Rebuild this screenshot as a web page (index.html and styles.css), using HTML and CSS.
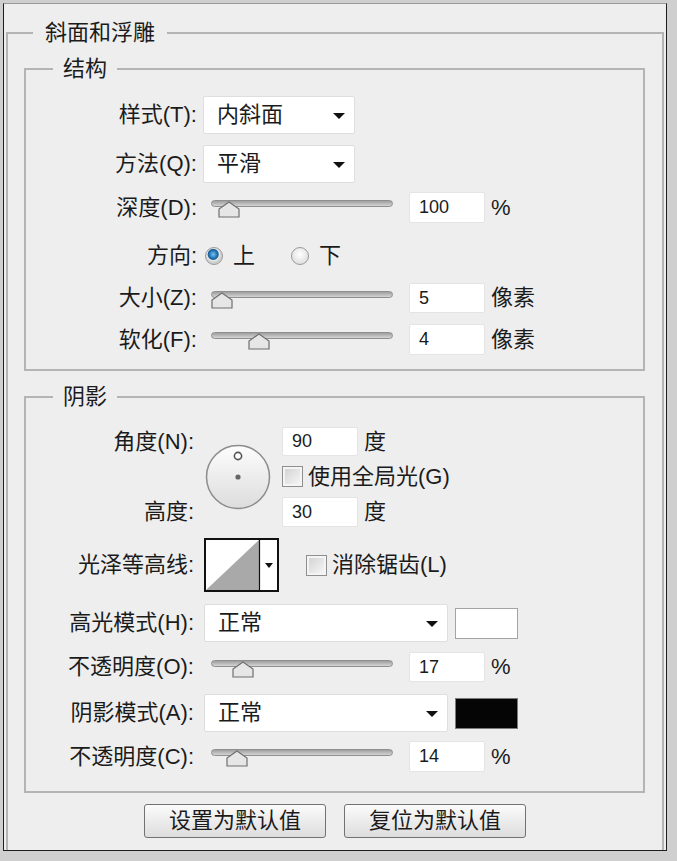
FILE: index.html
```html
<!DOCTYPE html>
<html lang="zh-CN">
<head>
    <meta charset="UTF-8">
    <title>斜面和浮雕</title>
    <link rel="stylesheet" href="styles.css">
</head>
<body>

<div class="panel">
    <fieldset class="box outer">
        <legend>斜面和浮雕</legend>

        <!-- 结构 -->
        <fieldset class="box inner">
            <legend>结构</legend>

            <div class="row h38">
                <span class="lbl">样式(T):</span>
                <div class="select short"><span>内斜面</span><i class="caret"></i></div>
            </div>
            <div class="row h38 mt11">
                <span class="lbl">方法(Q):</span>
                <div class="select short"><span>平滑</span><i class="caret"></i></div>
            </div>
            <div class="row h31 mt9">
                <span class="lbl">深度(D):</span>
                <div class="slider"><div class="track"></div><svg class="thumb" style="left: 7px" width="22" height="17" viewBox="0 0 22 17"><path d="M11 1 L21 8 L21 16 L1 16 L1 8 Z"/></svg></div>
                <input class="num" type="text" value="100">
                <span class="unit">%</span>
            </div>
            <div class="row h34 mt16">
                <span class="lbl">方向:</span>
                <span class="radio on"></span><span class="opt">上</span>
                <span class="radio"></span><span class="opt">下</span>
            </div>
            <div class="row h30 mt10">
                <span class="lbl">大小(Z):</span>
                <div class="slider"><div class="track"></div><svg class="thumb" style="left: 0px" width="22" height="17" viewBox="0 0 22 17"><path d="M11 1 L21 8 L21 16 L1 16 L1 8 Z"/></svg></div>
                <input class="num" type="text" value="5">
                <span class="unit">像素</span>
            </div>
            <div class="row h31 mt11">
                <span class="lbl">软化(F):</span>
                <div class="slider"><div class="track"></div><svg class="thumb" style="left: 37px" width="22" height="17" viewBox="0 0 22 17"><path d="M11 1 L21 8 L21 16 L1 16 L1 8 Z"/></svg></div>
                <input class="num" type="text" value="4">
                <span class="unit">像素</span>
            </div>
        </fieldset>

        <!-- 阴影 -->
        <fieldset class="box inner shadow">
            <legend>阴影</legend>

            <div class="angle">
                <span class="lbl a1">角度(N):</span>
                <div class="dial">
                    <svg width="66" height="66" viewBox="0 0 66 66">
                        <defs>
                            <linearGradient id="dg" x1="0" y1="0" x2="0" y2="1">
                                <stop offset="0" stop-color="#fdfdfd"/>
                                <stop offset="1" stop-color="#dcdcdc"/>
                            </linearGradient>
                        </defs>
                        <circle cx="33" cy="33" r="31.5" fill="url(#dg)" stroke="#8c8c8c" stroke-width="1.5"/>
                        <circle cx="33" cy="12" r="3.6" fill="#fff" stroke="#555" stroke-width="1.6"/>
                        <circle cx="33" cy="33" r="2.6" fill="#666"/>
                    </svg>
                </div>
                <div class="a1 c3">
                    <input class="num" type="text" value="90">
                    <span class="unit">度</span>
                </div>
                <div class="a2 c3">
                    <span class="check"></span><span class="opt">使用全局光(G)</span>
                </div>
                <span class="lbl a3">高度:</span>
                <div class="a3 c3">
                    <input class="num" type="text" value="30">
                    <span class="unit">度</span>
                </div>
            </div>

            <div class="row h54 mt11">
                <span class="lbl">光泽等高线:</span>
                <svg class="contour" width="75" height="54" viewBox="0 0 75 54">
                    <rect x="1" y="1" width="73" height="52" fill="#fff" stroke="#111" stroke-width="2"/>
                    <polygon points="2,52 55,2 55,52" fill="#a9a9a9"/>
                    <line x1="55.5" y1="1" x2="55.5" y2="53" stroke="#111" stroke-width="1.2"/>
                    <polygon points="61,25 69,25 65,30" fill="#111"/>
                </svg>
                <span class="check ml27"></span><span class="opt">消除锯齿(L)</span>
            </div>

            <div class="row h38 mt12">
                <span class="lbl">高光模式(H):</span>
                <div class="select long"><span>正常</span><i class="caret"></i></div>
                <span class="swatch white"></span>
            </div>
            <div class="row h30 mt10">
                <span class="lbl">不透明度(O):</span>
                <div class="slider"><div class="track"></div><svg class="thumb" style="left: 21px" width="22" height="17" viewBox="0 0 22 17"><path d="M11 1 L21 8 L21 16 L1 16 L1 8 Z"/></svg></div>
                <input class="num" type="text" value="17">
                <span class="unit">%</span>
            </div>
            <div class="row h38 mt12">
                <span class="lbl">阴影模式(A):</span>
                <div class="select long"><span>正常</span><i class="caret"></i></div>
                <span class="swatch black"></span>
            </div>
            <div class="row h31 mt9">
                <span class="lbl">不透明度(C):</span>
                <div class="slider"><div class="track"></div><svg class="thumb" style="left: 15px" width="22" height="17" viewBox="0 0 22 17"><path d="M11 1 L21 8 L21 16 L1 16 L1 8 Z"/></svg></div>
                <input class="num" type="text" value="14">
                <span class="unit">%</span>
            </div>
        </fieldset>

        <div class="buttons">
            <button>设置为默认值</button>
            <button>复位为默认值</button>
        </div>
    </fieldset>
</div>

</body>
</html>
```

FILE: styles.css
```css
body {
    margin: 0;
    background-color: #cfcfcf;
    font-family: "Liberation Sans", "Noto Sans CJK SC", sans-serif;
    font-size: 22px;
    color: #1b1b1b;
}

.panel {
    box-sizing: border-box;
    width: 664px;
    height: 848px;
    margin: 3px 0 0 3px;
    background-color: #eeeeee;
    border: 1px solid #1e1e1e;
    border-top-color: #9a9a9a;
    display: flex;
    flex-direction: column;
}

/* fieldset groups */
.box {
    margin: 0;
    padding: 0;
    border: 2px solid #b4b4b4;
    min-width: 0;
}

.box legend {
    line-height: 26px;
    height: 26px;
}

.outer {
    flex: 1;
    margin: 16px 0 0 2px;
    width: 658px;
    box-sizing: border-box;
    border-bottom: none;
}

.outer > legend {
    margin-left: 25px;
    padding: 0 12px;
}

.inner {
    margin: 10px 17px 0 16px;
    padding: 14px 0 14px 0;
}

.inner > legend {
    margin-left: 27px;
    padding: 0 10px;
}

.shadow {
    margin-top: 13px;
    padding: 17px 0 19px 0;
}

/* rows */
.row {
    display: flex;
    align-items: center;
}

.h30 { height: 30px; }
.h31 { height: 31px; }
.h34 { height: 34px; }
.h38 { height: 38px; }
.h54 { height: 54px; }
.mt9 { margin-top: 9px; }
.mt10 { margin-top: 10px; }
.mt11 { margin-top: 11px; }
.mt12 { margin-top: 12px; }
.mt16 { margin-top: 16px; }

.lbl {
    box-sizing: border-box;
    width: 172px;
    padding-right: 1px;
    flex: none;
    text-align: right;
    line-height: 26px;
    white-space: nowrap;
}

.shadow .lbl {
    padding-right: 4px;
}

.select {
    box-sizing: border-box;
    height: 38px;
    margin-left: 5px;
    padding-left: 13px;
    background-color: #fff;
    border: 1px solid #dedede;
    border-radius: 2px;
    display: flex;
    align-items: center;
    position: relative;
    line-height: 26px;
}

.select.short { width: 152px; }
.select.long { width: 244px; margin-left: 6px; }

.caret {
    position: absolute;
    right: 9px;
    top: 16px;
    width: 0;
    height: 0;
    border-left: 6px solid transparent;
    border-right: 6px solid transparent;
    border-top: 6px solid #111;
}

.slider {
    position: relative;
    width: 182px;
    height: 31px;
    margin-left: 13px;
    flex: none;
}

.track {
    position: absolute;
    left: 0;
    right: 0;
    top: 8px;
    height: 7px;
    box-sizing: border-box;
    border: 1px solid #8f8f8f;
    border-radius: 4px;
    background: linear-gradient(#9f9f9f, #d4d4d4);
}

.thumb {
    position: absolute;
    top: 9px;
}

.thumb path {
    fill: #e6e6e6;
    stroke: #6f6f6f;
    stroke-width: 1.2;
}

.num {
    box-sizing: border-box;
    width: 76px;
    height: 31px;
    margin: 0 0 0 16px;
    padding: 0 0 0 9px;
    background-color: #fff;
    border: 1px solid #e4e4e4;
    border-radius: 2px;
    font-family: "Liberation Sans", sans-serif;
    font-size: 18px;
    color: #1b1b1b;
    outline: none;
}

.h30 .num { height: 30px; }

.unit {
    margin-left: 6px;
    line-height: 26px;
}

/* radios and checkboxes */
.radio {
    box-sizing: border-box;
    width: 18px;
    height: 18px;
    border-radius: 50%;
    border: 1px solid #9a9a9a;
    background: radial-gradient(circle at 50% 40%, #ffffff, #d6d6d6);
    flex: none;
}

.radio.on {
    margin-left: 7px;
    background: radial-gradient(circle at 45% 40%, #7cc3ef 0, #1f73b4 4px, #1b5f98 5px, #e8e8e8 6px, #cfcfcf 8px);
}

.radio + .opt { margin-left: 10px; }
.opt + .radio { margin-left: 36px; }

.check {
    box-sizing: border-box;
    width: 21px;
    height: 21px;
    border: 1px solid #8f8f8f;
    background: linear-gradient(135deg, #cfcfcf, #fafafa);
    box-shadow: inset 0 0 0 2px #f4f4f4;
    flex: none;
    margin-right: 5px;
}

.opt {
    line-height: 26px;
}

.ml27 { margin-left: 27px; }

/* angle / altitude block */
.angle {
    display: grid;
    grid-template-columns: 172px 84px 1fr;
    grid-template-rows: 29px 21px 30px;
    row-gap: 10px;
    align-items: center;
}

.angle .a1 { grid-row: 1; }
.angle .a2 { grid-row: 2; }
.angle .a3 { grid-row: 3; }
.angle .lbl { grid-column: 1; }
.angle .c3 {
    grid-column: 3;
    display: flex;
    align-items: center;
}

.angle .c3 .num {
    margin-left: 0;
    height: 29px;
}

.angle .a3 .num { height: 30px; }

.dial {
    grid-column: 2;
    grid-row: 1 / 4;
    padding-left: 7px;
    height: 66px;
}

.contour {
    margin-left: 6px;
    flex: none;
}

.swatch {
    box-sizing: border-box;
    width: 63px;
    height: 31px;
    margin-left: 7px;
    border: 1px solid #a4a4a4;
}

.swatch.white { background-color: #fff; }
.swatch.black { background-color: #050505; border-color: #7a7a7a; }

/* bottom buttons */
.buttons {
    display: flex;
    justify-content: center;
    gap: 18px;
    margin-top: 11px;
}

button {
    box-sizing: border-box;
    width: 182px;
    height: 34px;
    padding: 0;
    border: 1px solid #727272;
    border-radius: 3px;
    background: linear-gradient(#fbfbfb, #dddddd);
    font-family: "Liberation Sans", "Noto Sans CJK SC", sans-serif;
    font-size: 22px;
    color: #1b1b1b;
    line-height: 26px;
}
```
